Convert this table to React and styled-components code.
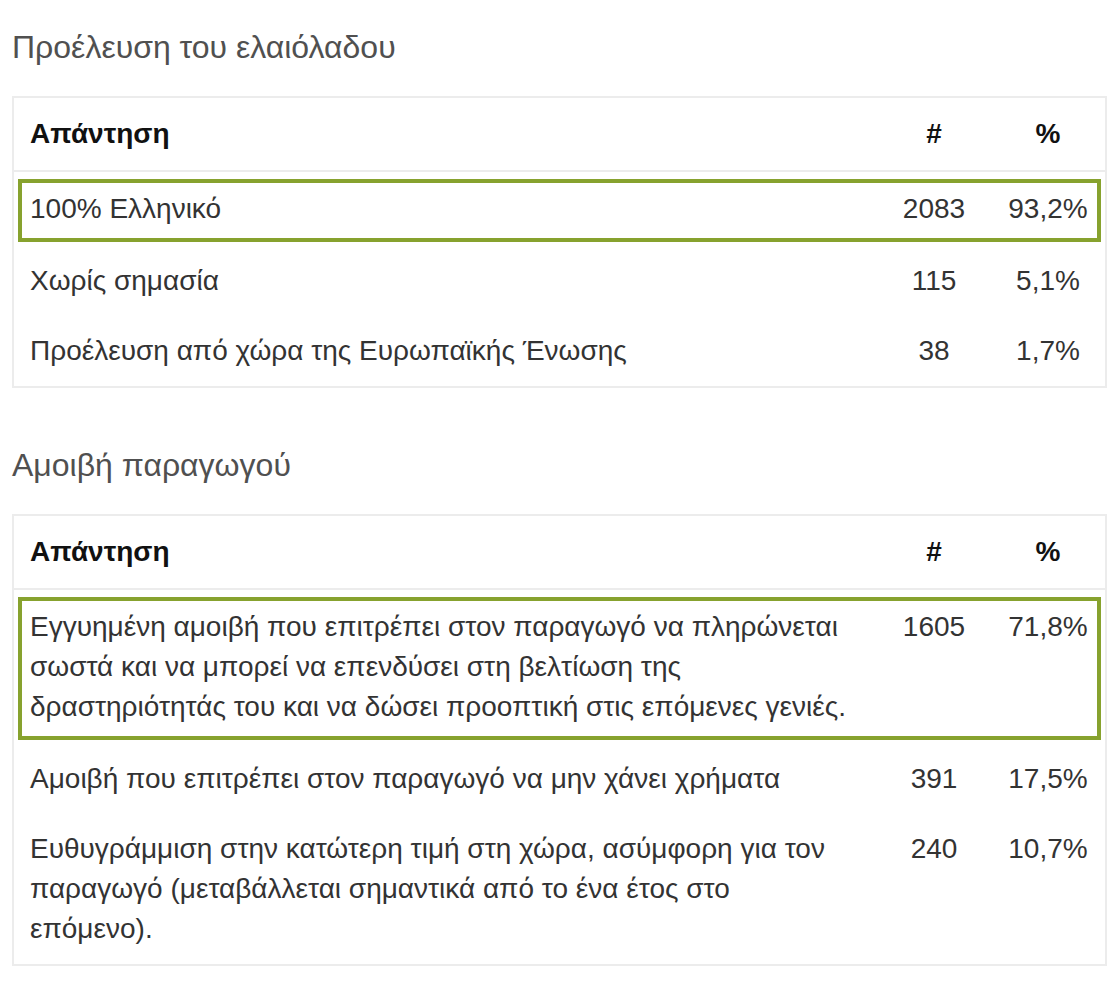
import React from 'react';
import styled, { createGlobalStyle } from 'styled-components';

const GlobalStyle = createGlobalStyle`
  body {
    margin: 0;
    background: #fff;
    font-family: "Liberation Sans", Arial, sans-serif;
    color: #333;
  }
`;

const sections = [
  {
    title: 'Προέλευση του ελαιόλαδου',
    rows: [
      { text: '100% Ελληνικό', count: '2083', pct: '93,2%', top: true },
      { text: 'Χωρίς σημασία', count: '115', pct: '5,1%' },
      { text: 'Προέλευση από χώρα της Ευρωπαϊκής Ένωσης', count: '38', pct: '1,7%' },
    ],
  },
  {
    title: 'Αμοιβή παραγωγού',
    rows: [
      {
        text: 'Εγγυημένη αμοιβή που επιτρέπει στον παραγωγό να πληρώνεται σωστά και να μπορεί να επενδύσει στη βελτίωση της δραστηριότητάς του και να δώσει προοπτική στις επόμενες γενιές.',
        count: '1605',
        pct: '71,8%',
        top: true,
      },
      { text: 'Αμοιβή που επιτρέπει στον παραγωγό να μην χάνει χρήματα', count: '391', pct: '17,5%' },
      {
        text: 'Ευθυγράμμιση στην κατώτερη τιμή στη χώρα, ασύμφορη για τον παραγωγό (μεταβάλλεται σημαντικά από το ένα έτος στο επόμενο).',
        count: '240',
        pct: '10,7%',
      },
    ],
  },
];

const Page = styled.div`
  padding: 27px 10px 0 12px;
`;

const Section = styled.section`
  margin-bottom: 57px;
`;

const Title = styled.h3`
  margin: 0 0 29px;
  font-size: 32px;
  line-height: 40px;
  font-weight: 400;
  color: #505050;
`;

const Table = styled.div`
  border: 2px solid #ececec;
`;

const Row = styled.div`
  position: relative;
  display: grid;
  grid-template-columns: 1fr 114px 114px;
  font-size: 28px;
  line-height: 40px;
  border-bottom: ${p => (p.$head ? '2px solid #ececec' : 'none')};

  ${p =>
    p.$top &&
    `
    padding: 2px 0;
    &::before {
      content: '';
      position: absolute;
      top: 7px;
      bottom: 4px;
      left: 4px;
      right: 4px;
      border: 4px solid #87a22e;
      pointer-events: none;
    }
  `}
`;

const Cell = styled.div`
  padding: ${p => (p.$head ? '16px' : '15px 16px')};
  padding-right: ${p => (p.$center ? '16px' : '26px')};
  text-align: ${p => (p.$center ? 'center' : 'left')};
  font-weight: ${p => (p.$head ? 700 : 400)};
  color: ${p => (p.$head ? '#111' : '#333')};
`;

const ResultTable = ({ rows }) => (
  <Table>
    <Row $head>
      <Cell $head>Απάντηση</Cell>
      <Cell $head $center>#</Cell>
      <Cell $head $center>%</Cell>
    </Row>
    {rows.map(r => (
      <Row key={r.text} $top={r.top}>
        <Cell>{r.text}</Cell>
        <Cell $center>{r.count}</Cell>
        <Cell $center>{r.pct}</Cell>
      </Row>
    ))}
  </Table>
);

export default function App() {
  return (
    <>
      <GlobalStyle />
      <Page>
        {sections.map(s => (
          <Section key={s.title}>
            <Title>{s.title}</Title>
            <ResultTable rows={s.rows} />
          </Section>
        ))}
      </Page>
    </>
  );
}
